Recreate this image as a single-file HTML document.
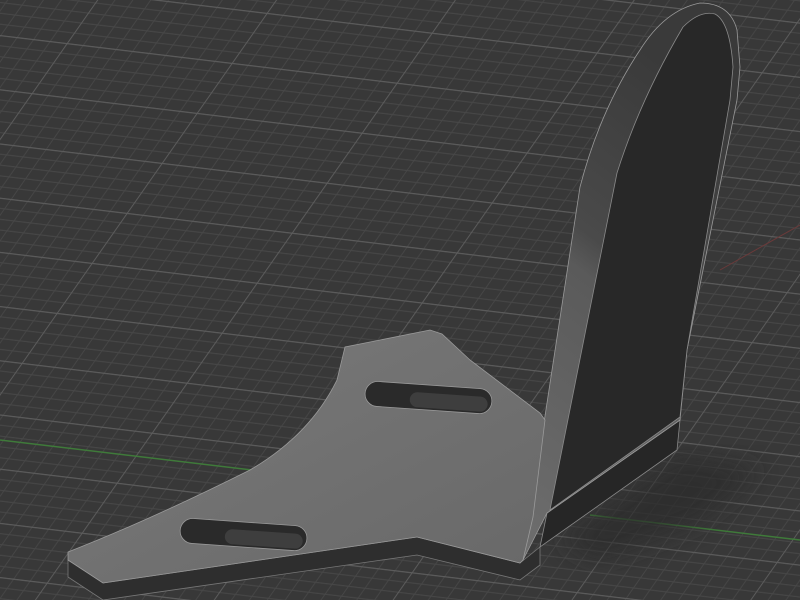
<!DOCTYPE html>
<html><head><style>
html,body{margin:0;padding:0;background:#383838;overflow:hidden}
svg{display:block}
</style></head><body>
<svg width="800" height="600" viewBox="0 0 800 600" xmlns="http://www.w3.org/2000/svg">
<defs>
<pattern id="g" patternUnits="userSpaceOnUse" width="165" height="50" patternTransform="matrix(1 0.12 -0.7 1 67 43)">
<rect width="165" height="50" fill="#383838"/>
<g stroke="#474747" stroke-width="1">
<line x1="16.5" y1="0" x2="16.5" y2="50"/><line x1="33" y1="0" x2="33" y2="50"/><line x1="49.5" y1="0" x2="49.5" y2="50"/><line x1="66" y1="0" x2="66" y2="50"/><line x1="82.5" y1="0" x2="82.5" y2="50"/><line x1="99" y1="0" x2="99" y2="50"/><line x1="115.5" y1="0" x2="115.5" y2="50"/><line x1="132" y1="0" x2="132" y2="50"/><line x1="148.5" y1="0" x2="148.5" y2="50"/>
<line x1="0" y1="10" x2="165" y2="10"/><line x1="0" y1="20" x2="165" y2="20"/><line x1="0" y1="30" x2="165" y2="30"/><line x1="0" y1="40" x2="165" y2="40"/>
</g>
<g stroke="#5c5c5c" stroke-width="1.2">
<line x1="0.5" y1="0" x2="0.5" y2="50"/><line x1="0" y1="0.5" x2="165" y2="0.5"/>
</g>
</pattern>
<linearGradient id="top" x1="0" y1="0" x2="1" y2="1">
<stop offset="0" stop-color="#7a7a7a"/><stop offset="1" stop-color="#686868"/>
</linearGradient>
<linearGradient id="rim" x1="0" y1="1" x2="0.3" y2="0">
<stop offset="0" stop-color="#6e6e6e"/><stop offset="0.55" stop-color="#5a5a5a"/><stop offset="0.62" stop-color="#4a4a4a"/><stop offset="1" stop-color="#3a3a3a"/>
</linearGradient>
<filter id="blur"><feGaussianBlur stdDeviation="12"/></filter>
</defs>
<rect width="800" height="600" fill="url(#g)"/>
<line x1="0" y1="440" x2="260" y2="471" stroke="#3f7a3a" stroke-width="1.5"/>
<line x1="590" y1="515" x2="800" y2="540" stroke="#3f7a3a" stroke-width="1.5"/>
<line x1="720" y1="270" x2="800" y2="225" stroke="#6a3a3a" stroke-width="1"/>
<path d="M560 540 L680 455 L760 470 L700 520 L600 560 Z" fill="#2c2c2c" opacity="0.7" filter="url(#blur)"/>
<path d="M68 560 L103 583 L417 537 L520 563 L540 547 L540 565 L520 580 L417 555 L103 600 L68 577 Z" fill="#2e2e2e" stroke="#777" stroke-width="0.8"/>
<path d="M540 547 L547 513 L680 420 L677 450 Z" fill="#262626" stroke="#888" stroke-width="0.8"/>
<path d="M523 560 L580 187 Q600 110 640 50 Q665 10 700 3 Q730 3 737 30 L740 67 L737 100 L687 350 L680 420 L547 513 Z" fill="url(#rim)" stroke="#999" stroke-width="0.8"/>
<path d="M550 510 L617 173 Q640 100 683 27 Q700 10 715 14 Q730 22 733 67 L730 100 L687 350 L680 417 Z" fill="#282828" stroke="#8a8a8a" stroke-width="0.8"/>
<path d="M68 552 Q150 520 250 470 Q310 435 337 380 L345 347 L430 330 L442 334 L470 360 L540 413 L545 420 L533 517 L523 560 L520 563 L417 537 L103 583 L68 560 Z" fill="url(#top)" stroke="#9a9a9a" stroke-width="0.8"/>
<g transform="rotate(4 428 397)"><rect x="365" y="385" width="127" height="25" rx="12.5" fill="#2a2a2a" stroke="#999" stroke-width="0.8"/><rect x="410" y="393" width="78" height="15" rx="7.5" fill="#3e3e3e"/></g>
<g transform="rotate(4 243 535)"><rect x="180" y="522" width="127" height="25" rx="12.5" fill="#2a2a2a" stroke="#999" stroke-width="0.8"/><rect x="225" y="530" width="78" height="15" rx="7.5" fill="#3e3e3e"/></g>
</svg>
</body></html>
